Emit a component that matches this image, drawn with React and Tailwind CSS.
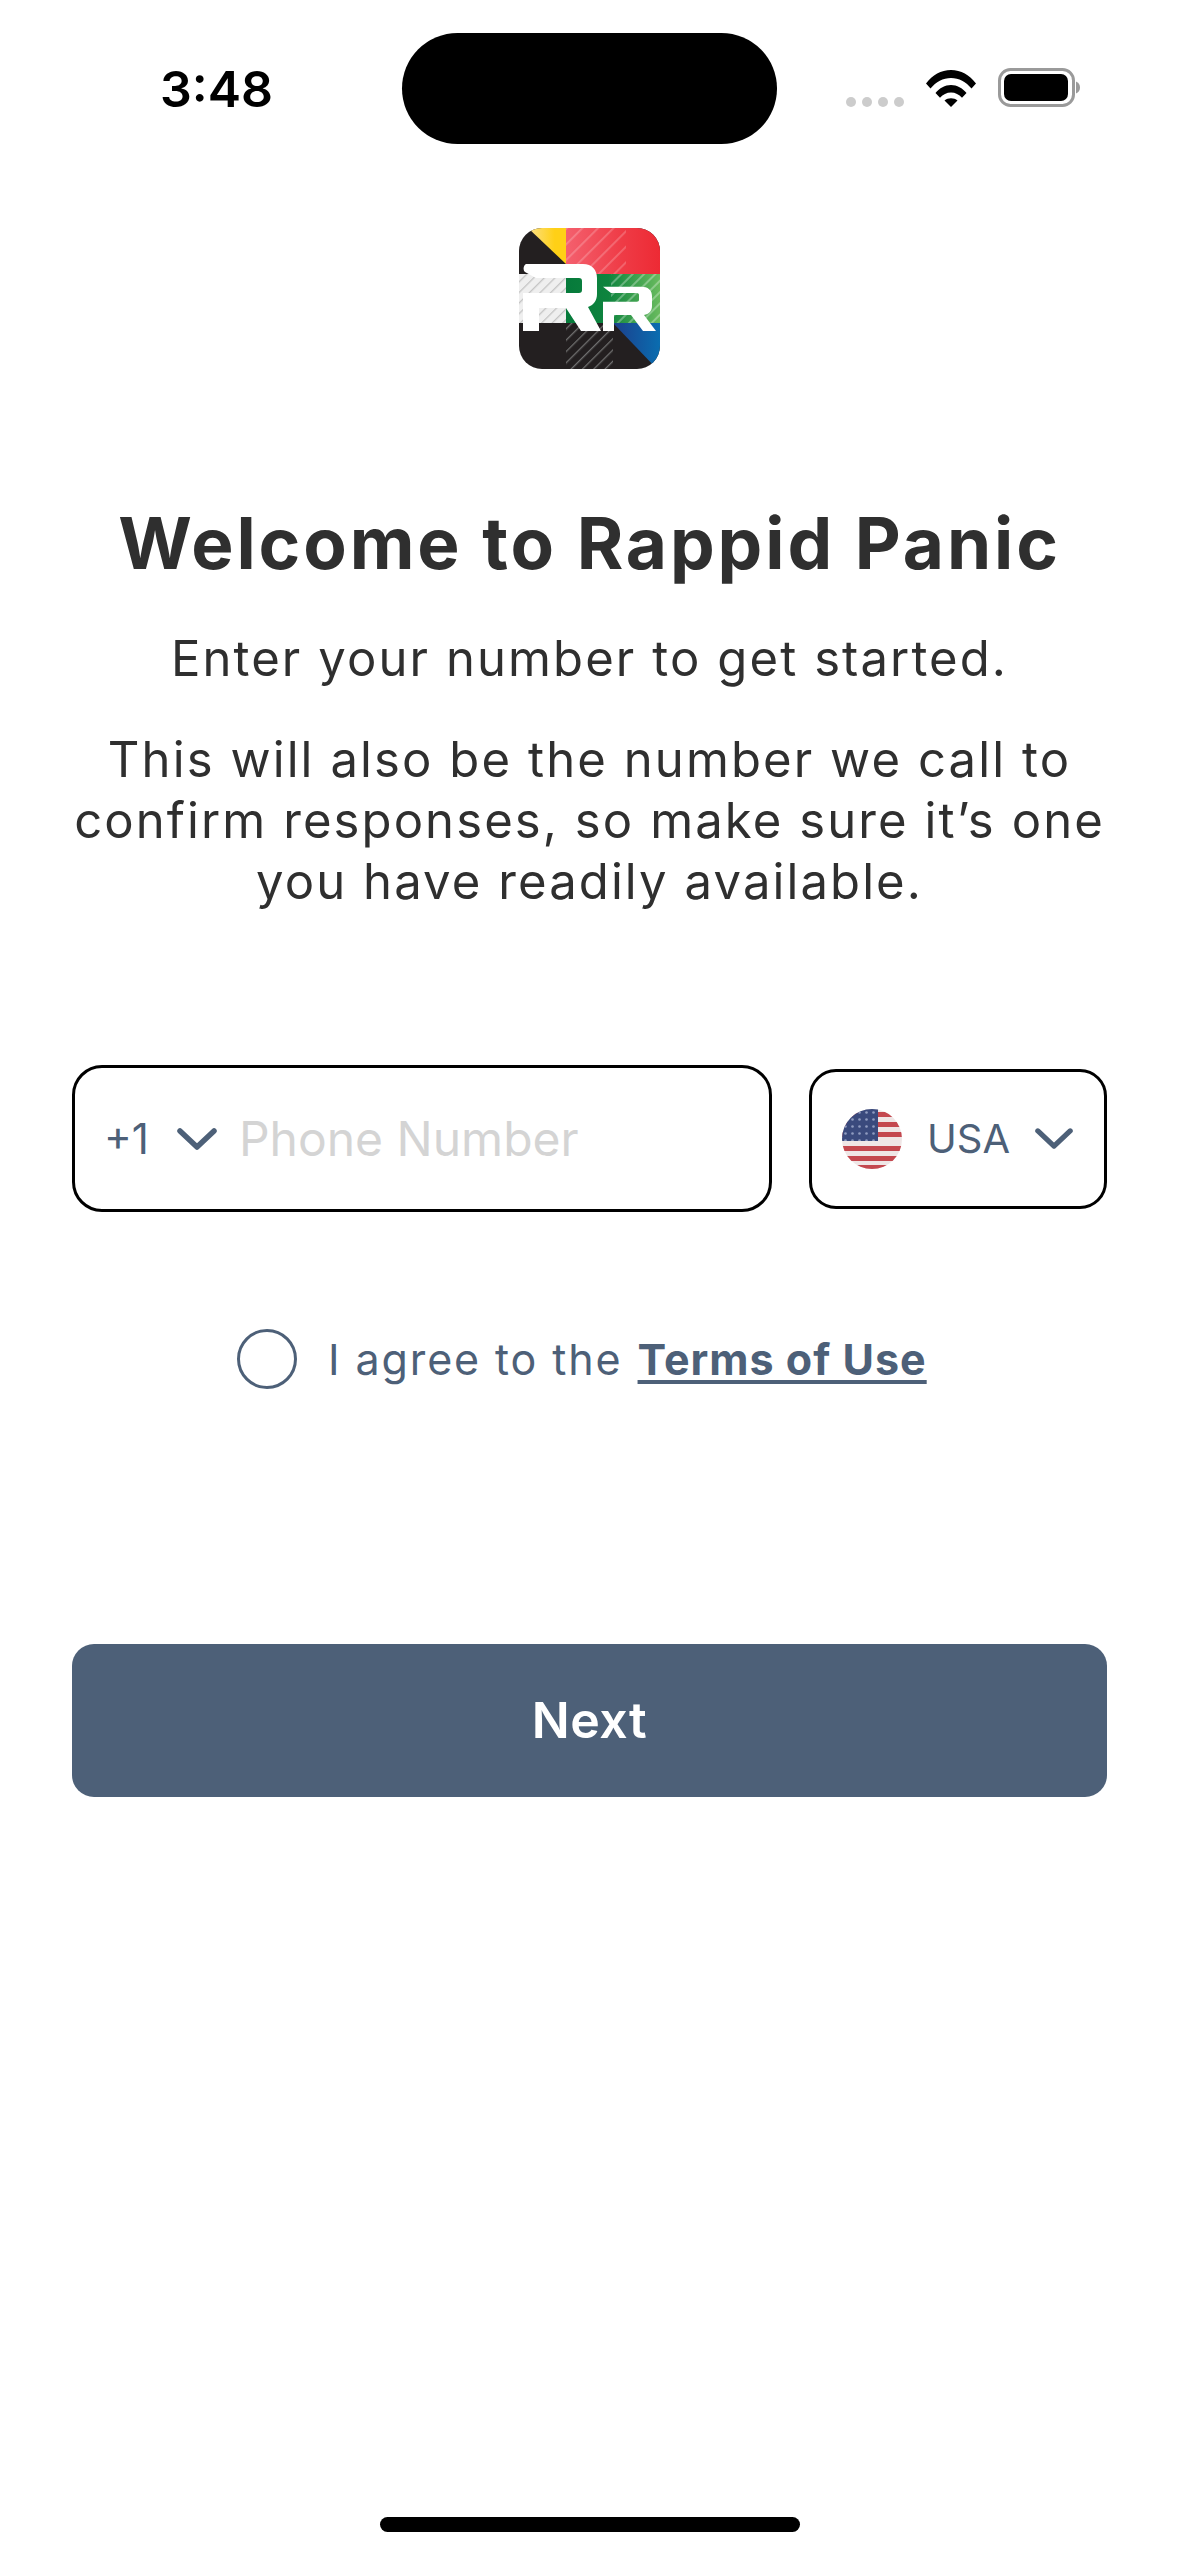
import React from "react";

function Chevron({ className }) {
  return (
    <svg className={className} viewBox="0 0 40 22" fill="none">
      <path d="M3 3L20 19L37 3" stroke="#4d6078" strokeWidth="5.5" strokeLinecap="round" strokeLinejoin="round" />
    </svg>
  );
}

function Wifi() {
  return (
    <svg className="w-[50px] h-[37px]" viewBox="0 0 50 37">
      <path d="M0 13.5C6.5 5 15 0 25 0C35 0 43.500 5 50 13.500L45.500 18.500C40 12 33 8 25 8C17 8 10 12 4.500 18.500Z" fill="#000" />
      <path d="M9.500 23C13.500 18 19 15 25 15C31 15 36.500 18 40.500 23L36 27.700C33 24.500 29.300 22.500 25 22.500C20.700 22.500 17 24.500 14 27.700Z" fill="#000" />
      <path d="M18.500 30.500C20.300 29 22.500 28.200 25 28.200C27.500 28.200 29.700 29 31.500 30.500L25 37Z" fill="#000" />
    </svg>
  );
}

function Battery() {
  return (
    <svg className="w-[82px] h-[39px]" viewBox="0 0 82 39">
      <rect x="1.500" y="1.500" width="74" height="36" rx="11" fill="none" stroke="#9a9a9a" strokeWidth="3" />
      <rect x="6" y="6" width="64" height="27" rx="7" fill="#000" />
      <path d="M78 13.500C80.500 14.500 82 16.800 82 19.500C82 22.200 80.500 24.500 78 25.500Z" fill="#9a9a9a" />
    </svg>
  );
}

function Logo() {
  return (
    <svg className="w-[141px] h-[141px] shrink-0" viewBox="0 0 141 141">
      <defs>
        <clipPath id="logoClip"><rect width="141" height="141" rx="23" /></clipPath>
        <linearGradient id="redG" x1="0" x2="1" y1="0" y2="0"><stop offset="0" stopColor="#f4606e" /><stop offset="0.6" stopColor="#ef3b46" /><stop offset="1" stopColor="#ed2a34" /></linearGradient>
        <linearGradient id="greenG" x1="0" x2="1" y1="0" y2="0"><stop offset="0" stopColor="#067a3b" /><stop offset="0.45" stopColor="#0e843e" /><stop offset="1" stopColor="#69bb5e" /></linearGradient>
        <linearGradient id="blueG" x1="0" x2="1" y1="0" y2="0"><stop offset="0" stopColor="#1c3f8c" /><stop offset="1" stopColor="#0a6db0" /></linearGradient>
        <linearGradient id="yellowG" x1="0" x2="1" y1="0" y2="0"><stop offset="0" stopColor="#fbe08a" /><stop offset="0.7" stopColor="#ffd016" /></linearGradient>
        <pattern id="hatchRed" width="11" height="11" patternUnits="userSpaceOnUse" patternTransform="rotate(45)"><rect width="1.800" height="11" fill="#ffffff" fillOpacity="0.22" /></pattern>
        <pattern id="hatchGreen" width="8" height="8" patternUnits="userSpaceOnUse" patternTransform="rotate(45)"><rect width="2" height="8" fill="#ffffff" fillOpacity="0.3" /></pattern>
        <pattern id="hatchGray" width="7.500" height="7.500" patternUnits="userSpaceOnUse" patternTransform="rotate(45)"><rect width="1.300" height="7.500" fill="#c4c4c4" /></pattern>
        <pattern id="hatchDark" width="8" height="8" patternUnits="userSpaceOnUse" patternTransform="rotate(45)"><rect width="1.300" height="8" fill="#6f6f6f" /></pattern>
      </defs>
      <g clipPath="url(#logoClip)">
        <rect width="141" height="141" fill="#231f20" />
        <path d="M9 0H47V36Z" fill="url(#yellowG)" />
        <rect x="47" width="94" height="46" fill="url(#redG)" />
        <rect x="47" width="60" height="46" fill="url(#hatchRed)" />
        <rect x="47" y="46" width="94" height="49" fill="url(#greenG)" />
        <rect x="92" y="46" width="49" height="49" fill="url(#hatchGreen)" />
        <rect y="46" width="47" height="49" fill="#efefef" />
        <rect y="46" width="47" height="49" fill="url(#hatchGray)" />
        <rect x="47" y="95" width="47" height="46" fill="url(#hatchDark)" />
        <path d="M94 95H141V141H138Z" fill="url(#blueG)" />
        <path fill="#fff" d="M7 36H64C73 36 78 42 78 50V66C78 72 75 77 69 79L82 103H62L47 80H20V103H4V65H60C62 65 63 64 63 62V53C63 51 62 50 60 50H17L6 44C4 42 4 38 7 36Z" />
        <path fill="#fff" d="M84 58.700H122C129 58.700 133 62 133 68V78C133 83 130 86 125 87L137 103H124L112 87H95V103H84V73.700H118C119.500 73.700 120 73 120 72V67C120 66 119.500 65 118 65H92Z" />
      </g>
    </svg>
  );
}

function Flag() {
  return (
    <svg className="w-[60px] h-[60px] shrink-0" viewBox="0 0 60 60">
      <defs>
        <clipPath id="flagClip"><circle cx="30" cy="30" r="30" /></clipPath>
        <pattern id="stars" width="7" height="7" patternUnits="userSpaceOnUse"><circle cx="3.500" cy="3.500" r="1.300" fill="#8f9bc0" /></pattern>
      </defs>
      <g clipPath="url(#flagClip)">
        <rect width="60" height="60" fill="#efe6e6" />
        <rect y="3" width="60" height="5" fill="#c4484f" />
        <rect y="13" width="60" height="5" fill="#c4484f" />
        <rect y="23" width="60" height="5" fill="#c4484f" />
        <rect y="37" width="60" height="5" fill="#c4484f" />
        <rect y="47" width="60" height="5" fill="#c4484f" />
        <rect y="56" width="60" height="4" fill="#c4484f" />
        <rect width="36" height="32" fill="#3a4a7d" />
        <rect width="36" height="32" fill="url(#stars)" />
      </g>
    </svg>
  );
}

export default function App() {
  return (
    <div className="w-[1179px] h-[2556px] bg-white flex flex-col font-['Inter',sans-serif]">
      <div className="h-[111px] mt-[33px] shrink-0 flex items-center pl-[160px]">
        <span className="w-[242px] text-[50px] leading-none font-semibold text-black">3:48</span>
        <div className="w-[375px] h-[111px] rounded-[56px] bg-black" />
        <div className="ml-[69px] flex items-end gap-[22px] mt-[-2px]">
          <div className="flex gap-[6px]">
            <div className="w-[10px] h-[10px] rounded-full bg-[#cccccc]" />
            <div className="w-[10px] h-[10px] rounded-full bg-[#cccccc]" />
            <div className="w-[10px] h-[10px] rounded-full bg-[#cccccc]" />
            <div className="w-[10px] h-[10px] rounded-full bg-[#cccccc]" />
          </div>
          <Wifi />
          <Battery />
        </div>
      </div>

      <div className="flex-1 flex flex-col items-stretch px-[72px]">
        <div className="flex justify-center mt-[84px]"><Logo /></div>
        <h1 className="mt-[134px] text-center text-[#2f2f2f] text-[71px] leading-[80px] font-bold tracking-[2.9px]">Welcome to Rappid Panic</h1>
        <p className="mt-[45px] text-center text-[#2f2f2f] text-[49px] leading-[61px] font-normal tracking-[2.1px]">Enter your number to get started.</p>
        <p className="mt-[40px] text-center text-[#2f2f2f] text-[49px] leading-[61px] font-normal tracking-[2.1px]">
          This will also be the number we call to<br />confirm responses, so make sure it’s one<br />you have readily available.
        </p>

        <div className="mt-[153px] flex items-center gap-[37px]">
          <div className="w-[700px] h-[147px] shrink-0 rounded-[30px] border-[3px] border-black flex items-center pl-[29px]">
            <span className="text-[42px] text-[#4d6078] leading-none">+1</span>
            <Chevron className="w-[40px] h-[22px] ml-[28px] shrink-0" />
            <input readOnly placeholder="Phone Number" className="ml-[22px] flex-1 min-w-0 bg-transparent outline-none text-[48px] text-[#d4d4d4] placeholder:text-[#d4d4d4]" />
          </div>
          <div className="flex-1 h-[140px] rounded-[27px] border-[3px] border-black flex items-center pl-[30px]">
            <Flag />
            <span className="ml-[25px] text-[40px] text-[#4d6078] leading-none">USA</span>
            <Chevron className="w-[38px] h-[21px] ml-[25px] shrink-0" />
          </div>
        </div>

        <div className="mt-[117px] flex items-center pl-[165px]">
          <div className="w-[60px] h-[60px] rounded-full border-[3px] border-[#4d6078] shrink-0" />
          <span className="ml-[31px] text-[43px] text-[#4d6078] tracking-[1.9px] leading-none">I agree to the <a className="font-bold underline underline-offset-[5px] decoration-[4px] tracking-[1px] ml-[1px]">Terms of Use</a></span>
        </div>

        <button className="mt-[255px] h-[153px] rounded-[22px] bg-[#4d6078] text-white text-[50px] font-semibold tracking-[0.5px] flex items-center justify-center">Next</button>

        <div className="mt-auto mb-[24px] self-center w-[420px] h-[15px] rounded-full bg-black" />
      </div>
    </div>
  );
}
